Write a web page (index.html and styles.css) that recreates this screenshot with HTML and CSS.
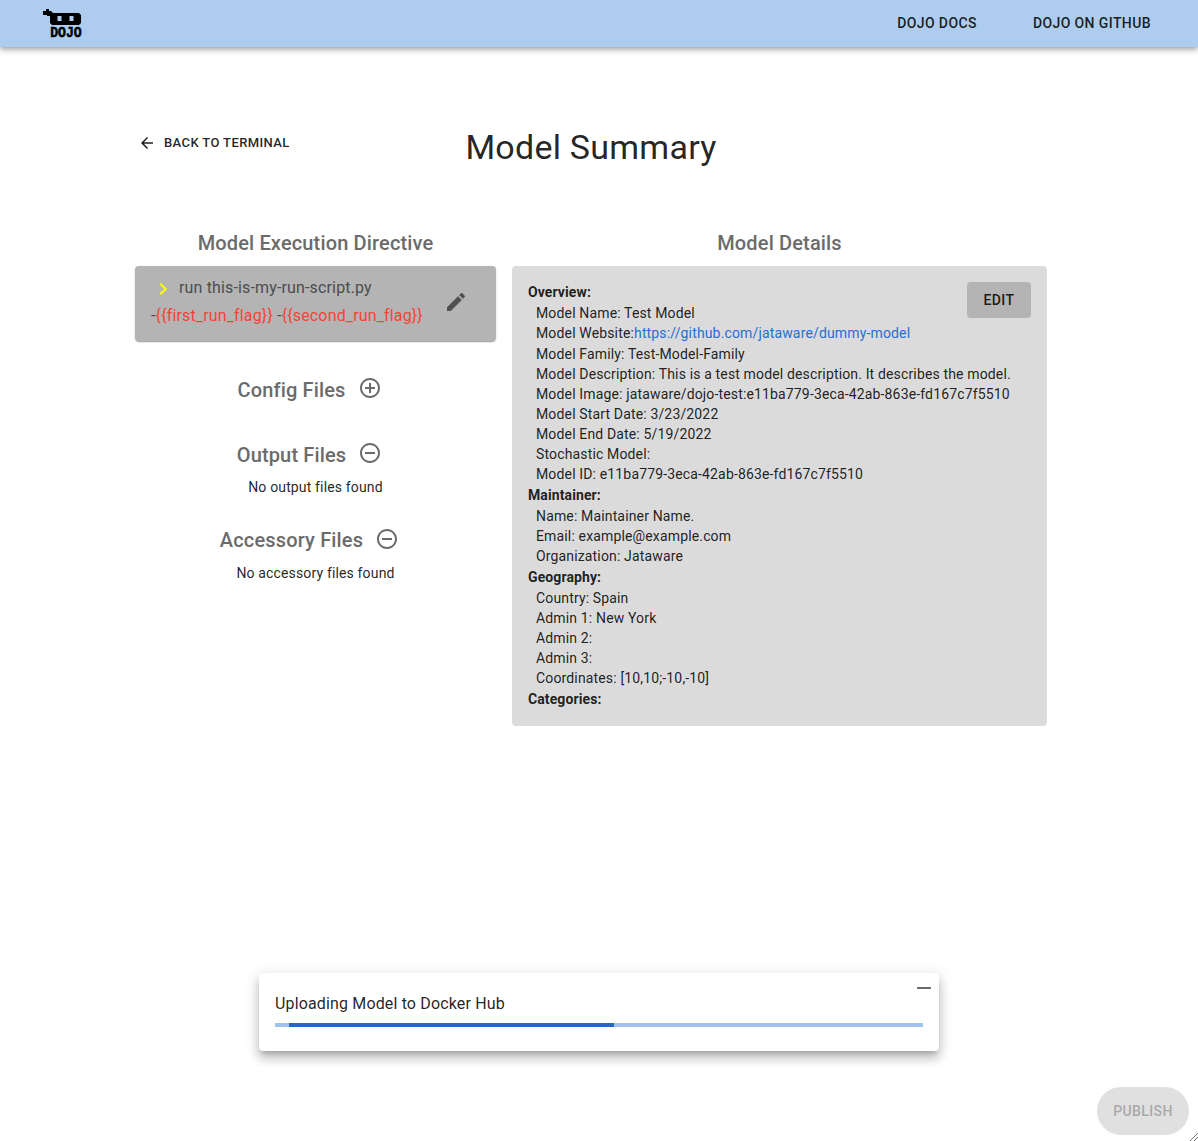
FILE: index.html
```html
<!DOCTYPE html>
<html lang="en">
<head>
<meta charset="utf-8">
<title>Model Summary</title>
<link rel="stylesheet" href="styles.css">
</head>
<body>
<header class="appbar">
  <svg class="logo" viewBox="0 0 40 33" role="img" aria-label="Dojo">
    <path d="M0 4h3V2h3v2h2l2 2h2v4H7V9H4V8H0z"/>
    <path fill-rule="evenodd" d="M9 6h27l2 2v8l-2 2H9l-2-2V8zM14.5 9v5h4V9zM26.5 9v5h4V9z"/>
    <text x="7.2" y="30.3" textLength="31.5" lengthAdjust="spacingAndGlyphs">DOJO</text>
  </svg>
  <nav class="nav">
    <a class="button-text">Dojo Docs</a>
    <a class="button-text">Dojo on GitHub</a>
  </nav>
</header>
<main class="page">
  <div class="heading">
    <a class="back"><svg class="back-icon" viewBox="0 0 24 24"><path d="M20 11H7.83l5.59-5.59L12 4l-8 8 8 8 1.41-1.41L7.83 13H20v-2z"/></svg>Back to Terminal</a>
    <h1>Model Summary</h1>
  </div>
  <div class="columns">
    <section class="left">
      <h2>Model Execution Directive</h2>
      <div class="directive">
        <div class="command">
          <div class="line"><svg class="chevron" viewBox="0 0 24 24"><path d="M10 6 8.59 7.41 13.17 12l-4.58 4.59L10 18l6-6z"/></svg>run this-is-my-run-script.py</div>
          <div class="line">-<span class="flag">{{first_run_flag}}</span> -<span class="flag">{{second_run_flag}}</span></div>
        </div>
        <svg class="pencil" viewBox="0 0 24 24"><path d="M3 17.25V21h3.75L17.81 9.94l-3.75-3.75L3 17.25zM20.71 7.04c.39-.39.39-1.02 0-1.41l-2.34-2.34a.9959.9959 0 0 0-1.41 0l-1.83 1.83 3.75 3.75 1.83-1.83z"/></svg>
      </div>
      <div class="files config">
        <h2>Config Files</h2>
        <svg class="toggle" viewBox="0 0 24 24"><path d="M13 7h-2v4H7v2h4v4h2v-4h4v-2h-4V7zm-1-5C6.48 2 2 6.48 2 12s4.48 10 10 10 10-4.48 10-10S17.52 2 12 2zm0 18c-4.41 0-8-3.59-8-8s3.59-8 8-8 8 3.59 8 8-3.59 8-8 8z"/></svg>
      </div>
      <div class="files output">
        <h2>Output Files</h2>
        <svg class="toggle" viewBox="0 0 24 24"><path d="M7 11v2h10v-2H7zm5-9C6.48 2 2 6.48 2 12s4.48 10 10 10 10-4.48 10-10S17.52 2 12 2zm0 18c-4.41 0-8-3.59-8-8s3.59-8 8-8 8 3.59 8 8-3.59 8-8 8z"/></svg>
      </div>
      <p class="empty">No output files found</p>
      <div class="files accessory">
        <h2>Accessory Files</h2>
        <svg class="toggle" viewBox="0 0 24 24"><path d="M7 11v2h10v-2H7zm5-9C6.48 2 2 6.48 2 12s4.48 10 10 10 10-4.48 10-10S17.52 2 12 2zm0 18c-4.41 0-8-3.59-8-8s3.59-8 8-8 8 3.59 8 8-3.59 8-8 8z"/></svg>
      </div>
      <p class="empty">No accessory files found</p>
    </section>
    <section class="right">
      <h2>Model Details</h2>
      <div class="details">
        <button class="edit">Edit</button>
        <h3>Overview:</h3>
        <p>Model Name: Test Model</p>
        <p class="website">Model Website:<a class="link">https://github.com/jataware/dummy-model</a></p>
        <p>Model Family: Test-Model-Family</p>
        <p>Model Description: This is a test model description. It describes the model.</p>
        <p>Model Image: jataware/dojo-test:e11ba779-3eca-42ab-863e-fd167c7f5510</p>
        <p>Model Start Date: 3/23/2022</p>
        <p>Model End Date: 5/19/2022</p>
        <p>Stochastic Model:</p>
        <p>Model ID: e11ba779-3eca-42ab-863e-fd167c7f5510</p>
        <h3>Maintainer:</h3>
        <p>Name: Maintainer Name.</p>
        <p>Email: example@example.com</p>
        <p>Organization: Jataware</p>
        <h3>Geography:</h3>
        <p>Country: Spain</p>
        <p>Admin 1: New York</p>
        <p>Admin 2:</p>
        <p>Admin 3:</p>
        <p>Coordinates: [10,10;-10,-10]</p>
        <h3>Categories:</h3>
      </div>
    </section>
  </div>
</main>
<div class="upload">
  <span class="minimize"></span>
  <div class="upload-label">Uploading Model to Docker Hub</div>
  <div class="progress"><div class="bar"></div></div>
</div>
<button class="publish" disabled>Publish</button>
<svg class="grip" viewBox="0 0 8 8"><path d="M0 8 8 0M4 8l4-4"/></svg>
</body>
</html>
```
FILE: styles.css
```css
* { box-sizing: border-box; }
body {
  margin: 0;
  height: 1141px;
  overflow: hidden;
  background: #fff;
  color: rgba(0, 0, 0, .87);
  font-family: Roboto, "Liberation Sans", sans-serif;
  font-size: 14px;
  line-height: 1.43;
  letter-spacing: .01071em;
}
h1, h2, h3, p { margin: 0; }
svg { fill: currentColor; flex: none; }

.appbar {
  height: 47px;
  display: flex;
  align-items: center;
  justify-content: space-between;
  padding: 0 47px 0 43px;
  background: #aeccee;
  box-shadow: 0 2px 4px -1px rgba(0,0,0,.2), 0 4px 5px 0 rgba(0,0,0,.14), 0 1px 10px 0 rgba(0,0,0,.12);
}
.logo { width: 40px; height: 33px; color: #000; overflow: visible; }
.logo text { font: 700 15px "Liberation Mono", monospace; letter-spacing: 0; stroke: #000; stroke-width: .5px; }
.nav { display: flex; gap: 56px; }
.button-text, .back, .edit, .publish {
  font-family: inherit;
  font-size: 14px;
  font-weight: 500;
  line-height: 1.75;
  letter-spacing: .02857em;
  text-transform: uppercase;
}

.page { width: 912px; margin: 77px 0 0 135px; }
.heading { display: grid; grid-template-columns: 1fr auto 1fr; align-items: start; }
.heading h1 { font-size: 34px; font-weight: 400; line-height: 1.235; letter-spacing: .00735em; margin-top: 3px; }
.back { display: flex; align-items: center; gap: 8px; padding: 7px 0 0 3px; font-size: 13px; line-height: 24px; letter-spacing: .03em; }
.back-icon { width: 18px; height: 18px; margin-top: -1px; }

.columns { display: grid; grid-template-columns: 361px 535px; gap: 16px; margin-top: 58px; }
h2 { font-size: 20px; font-weight: 500; line-height: 32px; letter-spacing: .0075em; color: #6b6b6b; text-align: center; }
.columns h2 { margin-bottom: 7px; }

.directive {
  height: 75px;
  display: flex;
  align-items: center;
  justify-content: space-between;
  padding: 0 28px 0 16px;
  border-radius: 4px;
  background: #b4b4b4;
  box-shadow: 0 2px 1px -1px rgba(0,0,0,.2), 0 1px 1px 0 rgba(0,0,0,.14), 0 1px 3px 0 rgba(0,0,0,.12);
}
.command { color: #4d4d4d; font-size: 16px; line-height: 28px; letter-spacing: .00938em; padding-bottom: 3px; }
.line { display: flex; align-items: center; white-space: pre; }
.flag { color: #f44336; }
.chevron { width: 24px; height: 24px; margin: 3px 4px 0 0; color: #ff0; }
.pencil { width: 24px; height: 24px; color: #505050; margin-top: -3px; }

.files { display: flex; align-items: center; justify-content: center; gap: 12px; height: 32px; }
.files .toggle { width: 24px; height: 24px; color: #6b6b6b; margin-top: -4px; }
.files h2 { margin: 0; }
.config { margin: 33px 12px 33px 0; }
.output, .accessory { margin-right: 12px; }
.files.accessory .toggle { margin-top: -2px; }
.empty { text-align: center; margin: 6px 0 27px; }
.accessory + .empty { margin-top: 7px; }

.details { height: 460px; padding: 15px 16px 16px; border-radius: 4px; background: #dbdbdb; }
.details h3 { font-size: 14px; font-weight: 700; line-height: 22px; letter-spacing: .00714em; }
.details p { padding-left: 8px; line-height: 20.02px; }
.details .website { padding-bottom: 1px; }
.link { color: #1f6fd6; }
.edit { float: right; width: 64px; height: 36px; margin-top: 1px; padding: 0; border: 0; border-radius: 4px; color: inherit; background: #b4b4b4; }

.upload {
  position: absolute;
  left: 259px;
  top: 973px;
  width: 680px;
  height: 78px;
  padding: 17px 16px 16px;
  border-radius: 4px;
  background: #fff;
  box-shadow: 0 5px 5px -3px rgba(0,0,0,.2), 0 8px 10px 1px rgba(0,0,0,.14), 0 3px 14px 2px rgba(0,0,0,.12);
}
.upload-label { font-size: 16px; line-height: 28px; letter-spacing: .00938em; }
.minimize { position: absolute; top: 14px; right: 8px; width: 14px; height: 2px; background: #6b6b6b; }
.progress { height: 4px; margin-top: 5px; background: #9fc1ea; }
.bar { width: 325px; height: 4px; margin-left: 14px; background: #2167cb; }

.publish {
  position: absolute;
  left: 1097px;
  top: 1087px;
  width: 92px;
  height: 48px;
  padding: 0;
  border: 0;
  border-radius: 24px;
  background: #e0e0e0;
  color: #a9a9a9;
}
.grip { position: absolute; right: 0; bottom: 0; width: 8px; height: 8px; fill: none; stroke: #777; stroke-width: 1; }
```
